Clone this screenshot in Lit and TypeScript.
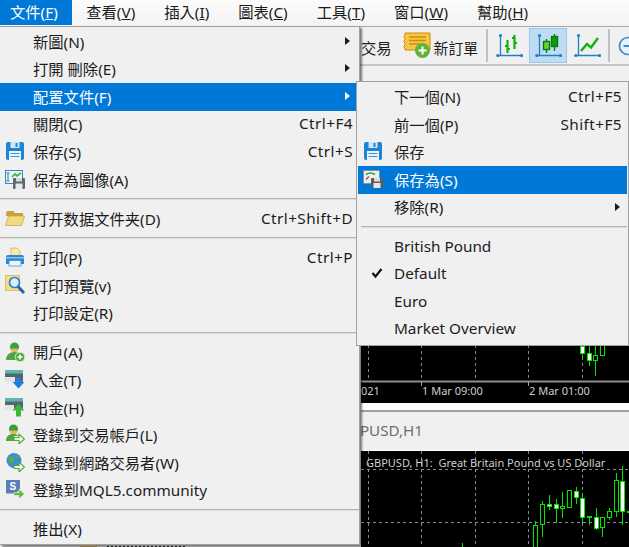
import { LitElement, css, html, svg } from "lit";
import { customElement } from "lit/decorators.js";

type Item = { label?: string; key?: string; icon?: string; arrow?: boolean; active?: boolean; check?: boolean; sep?: boolean };

const ARROW_WHITE = svg`<path d="M9 13.5h5V10l5.500 5-5.500 5v-3.500H9z" fill="#eef6e6" stroke="#58a83a" stroke-width="1.200"/>`;
const ARROW_GREEN = svg`<path d="M9 13.5h5V10l5.500 5-5.500 5v-3.500H9z" fill="#62bd42" stroke="#e8f4df" stroke-width=".6"/>`;

const ICONS: Record<string, unknown> = {
  save: svg`
    <rect x="1" y="1" width="18" height="18" rx="2" fill="#1d84d4"/>
    <rect x="5.500" y="1" width="9" height="6" fill="#cfe6f7"/>
    <rect x="10.500" y="2" width="2" height="4" fill="#1d84d4"/>
    <rect x="4" y="10" width="12" height="9" fill="#eaf3fa"/>
    <path d="M5.500 12.500h9M5.500 15.500h9" stroke="#3e93d6" stroke-width="1.200"/>
  `,
  saveImg: svg`
    <rect x=".5" y="1.500" width="17" height="13" fill="#eef3f6" stroke="#3585c8"/>
    <path d="M3 4v8M1.500 4h3M1.500 12h3" stroke="#2b78bc"/>
    <path d="M7 8l3-3 2 2 4-3" fill="none" stroke="#3cae32" stroke-width="1.600"/>
    <rect x="8" y="9" width="12" height="11" rx="1" fill="#5f666b"/>
    <rect x="11" y="9" width="6" height="3.500" fill="#d5d9dc"/>
    <rect x="10.500" y="14.500" width="7" height="5.500" fill="#e8eaec"/>
  `,
  folder: svg`
    <path d="M1 5l1-2h6l2 2h8v3H1z" fill="#c9a23a"/>
    <path d="M.5 17.500l3-9.500h16l-3 9.500z" fill="#f3da82" stroke="#c9a23a" stroke-width=".7"/>
  `,
  print: svg`
    <path d="M6 1h6l3 3v6H6z" fill="#f9e8a8" stroke="#c8a94a" stroke-width=".7"/>
    <path d="M1 10c0-1 .5-2 2-2h14c1.500 0 2 1 2 2v7H1z" fill="#2f86d2"/>
    <path d="M1 10h18v1.500H1z" fill="#8cc3ec"/>
    <rect x="4" y="13.500" width="12" height="5.500" fill="#eef4f9" stroke="#2f86d2" stroke-width=".7"/>
  `,
  preview: svg`
    <rect x=".5" y=".5" width="14" height="15" fill="#f4dc86" stroke="#cfb04a" stroke-width=".7"/>
    <circle cx="9.500" cy="7.500" r="5" fill="#dcedfa" stroke="#2f7fc8" stroke-width="1.700"/>
    <path d="M13 11.500l6 6.500" stroke="#2467b0" stroke-width="3"/>
  `,
  open: svg`
    <circle cx="9.500" cy="5" r="4.500" fill="#3f9e36"/>
    <path d="M6 6.500h7V9l-3.500 2L6 9z" fill="#d9b66a"/>
    <path d="M1 18c0-5 3.500-8 8.500-8s8.500 3 8.500 8z" fill="#4aa83e"/>
    <circle cx="15" cy="15" r="4.800" fill="#54ac3e" stroke="#eaf3e4" stroke-width=".8"/>
    <path d="M12.500 15h5M15 12.500v5" stroke="#fff" stroke-width="1.600"/>
  `,
  deposit: svg`
    <rect y="1" width="18" height="12" rx="1" fill="#59646a"/>
    <rect y="1" width="18" height="3.500" fill="#5ab8b0"/>
    <rect y="8" width="10" height="5" fill="#dfe7ea"/>
    <path d="M11 9h5v4h3.500l-6 6.500-6-6.500H11z" fill="#1f7fe0"/>
  `,
  withdraw: svg`
    <rect y="1" width="18" height="12" rx="1" fill="#59646a"/>
    <rect y="1" width="18" height="3.500" fill="#5ab8b0"/>
    <rect y="8" width="9" height="5" fill="#dfe7ea"/>
    <path d="M13.500 7l6 6.500H16v6h-5v-6H7.500z" fill="#3db83a"/>
  `,
  login: svg`
    <circle cx="8.500" cy="5" r="4.500" fill="#3f9e36"/>
    <path d="M5 6.500h7V9l-3.500 2L5 9z" fill="#d9b66a"/>
    <path d="M1 17c0-4.500 3-7 7.500-7 2 0 4 .5 5 2H9v5z" fill="#4aa83e"/>
    ${ARROW_WHITE}
  `,
  web: svg`
    <circle cx="9" cy="8.500" r="7.500" fill="#3a8cd6"/>
    <path d="M3 6c3-3 5-1 6 1s-2 5-4 4zM10 2c2 0 4 2 4 4l-3-1z" fill="#58b03c"/>
    ${ARROW_WHITE}
  `,
  mql: svg`
    <path d="M1 1h14v10l-5 3.500H1z" fill="#5b7fb5"/>
    <text x="4.500" y="11" font-size="10" font-weight="700" fill="#fff" font-family="Liberation Sans">S</text>
    ${ARROW_GREEN}
  `,
  saveAs: svg`
    <rect x=".5" y="1.500" width="16" height="13" fill="#e8f0f0" stroke="#7d8a8f" stroke-width=".8"/>
    <path d="M3 5.500c3-2 6-2 9 0" fill="none" stroke="#2fa62f" stroke-width="1.600"/>
    <path d="M3 10.500l3-3" stroke="#d24b3a" stroke-width="1.600"/>
    <rect x="8" y="9" width="12" height="10" rx="1" fill="#565c60"/>
    <rect x="11" y="9" width="6" height="3.500" fill="#d8dcdf"/>
    <rect x="10.500" y="14" width="7" height="5" fill="#e6e8ea"/>
  `,
};

const MAIN: Item[] = [
  { label: "新圖(N)", arrow: true },
  { label: "打開 刪除(E)", arrow: true },
  { label: "配置文件(F)", arrow: true, active: true },
  { label: "關閉(C)", key: "Ctrl+F4" },
  { label: "保存(S)", key: "Ctrl+S", icon: "save" },
  { label: "保存為圖像(A)", icon: "saveImg" },
  { sep: true },
  { label: "打开数据文件夹(D)", key: "Ctrl+Shift+D", icon: "folder" },
  { sep: true },
  { label: "打印(P)", key: "Ctrl+P", icon: "print" },
  { label: "打印預覽(v)", icon: "preview" },
  { label: "打印設定(R)" },
  { sep: true },
  { label: "開戶(A)", icon: "open" },
  { label: "入金(T)", icon: "deposit" },
  { label: "出金(H)", icon: "withdraw" },
  { label: "登錄到交易帳戶(L)", icon: "login" },
  { label: "登錄到網路交易者(W)", icon: "web" },
  { label: "登錄到MQL5.community", icon: "mql" },
  { sep: true },
  { label: "推出(X)" },
];

const SUB: Item[] = [
  { label: "下一個(N)", key: "Ctrl+F5" },
  { label: "前一個(P)", key: "Shift+F5" },
  { label: "保存", icon: "save" },
  { label: "保存為(S)", icon: "saveAs", active: true },
  { label: "移除(R)", arrow: true },
  { sep: true },
  { label: "British Pound" },
  { label: "Default", check: true },
  { label: "Euro" },
  { label: "Market Overview" },
];

const MENUBAR: [string, string][] = [
  ["文件", "F"],
  ["查看", "V"],
  ["插入", "I"],
  ["圖表", "C"],
  ["工具", "T"],
  ["窗口", "W"],
  ["幫助", "H"],
];

// [x, wickTop, wickBottom, bodyTop, bodyBottom, filled]
const LOWER_CANDLES: number[][] = [
  [462, 543, 550, 550, 551, 0],
  [535, 521, 550, 525, 550, 0],
  [542, 501, 537, 504, 524, 0],
  [549, 495, 510, 504, 506, 1],
  [556, 499, 523, 504, 508, 1],
  [562, 492, 518, 506, 508, 0],
  [569, 490, 507, 490, 507, 0],
  [576, 487, 504, 491, 497, 1],
  [582, 493, 523, 498, 517, 1],
  [589, 516, 525, 516, 517, 1],
  [596, 508, 530, 517, 528, 1],
  [602, 517, 537, 517, 527, 0],
  [609, 508, 520, 511, 517, 0],
  [616, 473, 517, 480, 511, 0],
  [622, 466, 525, 481, 511, 1],
  [629, 470, 530, 511, 512, 1],
];

const UPPER_CANDLES: number[][] = [
  [582, 340, 360, 346, 353, 1],
  [589, 346, 366, 353, 360, 1],
  [595, 346, 376, 355, 360, 0],
  [602, 340, 355, 340, 355, 0],
];

const GRID_X = [368, 421, 475, 528, 582];

@customElement("app-root")
export class AppRoot extends LitElement {
  static override styles = css`
    :host {
      display: block;
      position: relative;
      width: 629px;
      height: 547px;
      overflow: hidden;
      background: #f0f0f0;
      font-family: "Noto Sans", "Noto Sans CJK TC", sans-serif;
      font-size: 15.3px;
      color: #1c1c1c;
    }

    .menubar {
      display: flex;
      height: 26px;
      box-sizing: border-box;
      background: linear-gradient(#fcfcfc, #f3f3f3);
    }
    .menubar span {
      padding: 0 14.5px;
      line-height: 25px;
      height: 25px;
      flex: none;
      white-space: nowrap;
    }
    .menubar span:first-child {
      padding-left: 10px;
      padding-right: 14px;
      background: #0078d7;
      color: #fff;
    }

    .toolbar {
      display: flex;
      align-items: center;
      box-sizing: border-box;
      height: 40px;
      padding-left: 361px;
      border-top: 1px solid #a8a8a8;
      border-bottom: 2px solid #c4c4c4;
      white-space: nowrap;
      overflow: hidden;
    }
    .toolbar > * { flex: none; }
    .trade { padding-top: 3px; }
    .order { display: flex; align-items: center; gap: 3px; margin-left: 11px; }
    .order span { padding-top: 3px; font-size: 14.8px; }
    .vsep { width: 2px; height: 33px; background: #c0c0c0; }
    .order + .vsep { margin: 0 2px 0 8px; }
    .tool { width: 38px; height: 35px; display: flex; align-items: center; justify-content: center; }
    .tool.on { background: #bfdcf5; outline: 1px solid #99c8ee; outline-offset: -1px; margin: 0 1px; }
    .tool + .vsep { margin: 0 8px 0 2px; }

    .charts { display: flex; flex-direction: column; margin-left: 361px; padding-top: 15px; }
    .chart { background: #000; flex: none; overflow: hidden; }
    .chart svg { display: block; }
    .chart text { font-family: "Noto Sans", sans-serif; font-size: 11px; fill: #cfcfcf; white-space: pre; }
    .chart.upper { height: 322px; }
    .white-strip { height: 7px; background: #fff; border-bottom: 2px solid #a0a0a0; }
    .title-strip {
      height: 38px;
      margin-left: -22px;
      padding-bottom: 2px;
      box-sizing: border-box;
      font-size: 15.2px;
      color: #6e6e6e;
      display: flex;
      align-items: center;
      white-space: nowrap;
    }
    .chart.lower { height: 97px; border-top: 1px solid #fff; }

    .menu {
      position: absolute;
      box-sizing: border-box;
      background: #f0f0f0;
      border: 1px solid #a0a0a0;
    }
    .menu.main {
      left: 0;
      top: 26px;
      width: 360px;
      height: 519px;
      padding-top: 0.8px;
      border-left: none;
      box-shadow: 2px 2px 2px rgba(0, 0, 0, 0.5);
    }
    .menu.sub {
      left: 356px;
      top: 81px;
      width: 273px;
      height: 265px;
      padding-top: 1.2px;
    }

    .row {
      position: relative;
      display: flex;
      align-items: center;
      box-sizing: border-box;
      height: 27.6px;
      padding: 0 6px 2px 33px;
      white-space: nowrap;
    }
    .sub .row { padding: 0 5px 2px 36px; margin: 0 1px; }
    .row.active { background: #0078d7; color: #fff; }
    .row .label { flex: 1; }
    .row .key { margin-left: 12px; letter-spacing: 0.45px; }
    .row .ico { position: absolute; left: 5px; top: 3px; width: 20px; height: 20px; }
    .row .arrow {
      position: absolute;
      right: 9px;
      top: 9px;
      border-left: 5px solid currentColor;
      border-top: 4.5px solid transparent;
      border-bottom: 4.5px solid transparent;
    }
    .sub .row .arrow { right: 7px; }
    .row .check { position: absolute; left: 13px; top: 7px; width: 12px; height: 12px; }
    .separator { height: 1px; background: #b4b4b4; border-bottom: 1px solid #dedede; margin: 4.8px 0; }
    .sub .separator { margin: 4.8px 1px 4.8px 4px; }

    /* what peeks out below the main menu: the panel behind it */
    .peek { position: absolute; bottom: 0; height: 1.5px; }
    .peek.icon { left: 80px; width: 17px; background: #d8b84a; }
    .peek.name {
      left: 107px;
      width: 78px;
      background: repeating-linear-gradient(90deg, #222 0 2px, transparent 2px 4px);
    }
  `;

  private renderItem(item: Item) {
    if (item.sep) return html`<div class="separator"></div>`;
    return html`
      <div class="row ${item.active ? "active" : ""}">
        ${item.icon ? html`<svg class="ico" viewBox="0 0 20 20">${ICONS[item.icon]}</svg>` : ""}
        ${item.check
          ? html`<svg class="check" viewBox="0 0 12 12"><path d="M1.500 6l3 3.500L10.500 2" fill="none" stroke="#111" stroke-width="2.200" /></svg>`
          : ""}
        <span class="label">${item.label}</span>
        ${item.key ? html`<span class="key">${item.key}</span>` : ""}
        ${item.arrow ? html`<span class="arrow"></span>` : ""}
      </div>
    `;
  }

  private renderCandle([x, wt, wb, bt, bb, filled]: number[]) {
    return svg`
      <path d="M${x + 0.5} ${wt}V${wb}" stroke="#00e400" />
      <rect x=${x - 1.5} y=${bt + 0.5} width="4" height=${Math.max(bb - bt, 1)}
        fill=${filled ? "#fff" : "#000"} stroke="#00e400" />
    `;
  }

  private renderGridX(y1: number, y2: number) {
    return GRID_X.map((x) => svg`<path d="M${x + 0.5} ${y1}V${y2}" stroke="#7d8a94" stroke-dasharray="3 3" />`);
  }

  private renderAxes() {
    return svg`
      <path d="M4.500 2v20.500M1.500 22.500H26" fill="none" stroke="#1f7fc8" stroke-width="1.300" />
      <circle cx="4.500" cy="2.500" r="1.600" fill="#1f7fc8" />
      <circle cx="1.800" cy="22.500" r="1.600" fill="#1f7fc8" />
      <circle cx="25.500" cy="22.500" r="1.600" fill="#1f7fc8" />
    `;
  }

  override render() {
    return html`
      <div class="menubar">
        ${MENUBAR.map(([t, k]) => html`<span>${t}(<u>${k}</u>)</span>`)}
      </div>
      <div class="toolbar">
        <span class="trade">交易</span>
        <span class="order">
          <svg width="28" height="27" viewBox="0 0 28 27">
            <path d="M2 1h25v17H2v-2L.5 14.500 2 13v-2L.5 9.500 2 8V6L.5 4.500 2 3z" fill="#f6c840" stroke="#d08a14" />
            <path d="M6 5h17M6 8.500h17M6 12h11" stroke="#d08a14" stroke-width="1.500" />
            <circle cx="19.500" cy="18.500" r="7.500" fill="#62b23c" />
            <path d="M15.500 18.500h8M19.500 14.500v8" stroke="#fff" stroke-width="2" />
          </svg>
          <span>新訂單</span>
        </span>
        <span class="vsep"></span>
        <span class="tool">
          <svg width="27" height="26" viewBox="0 0 27 26">
            ${this.renderAxes()}
            <path d="M11.500 7v13M9 13h2.500M11.500 16H14M18.500 2v14M16 5h2.500M18.500 10H21" fill="none" stroke="#0fb30f" stroke-width="2.200" />
          </svg>
        </span>
        <span class="tool on">
          <svg width="27" height="26" viewBox="0 0 27 26">
            ${this.renderAxes()}
            <path d="M11.500 6v14M19.500 1v17" stroke="#0a7a0a" stroke-width="1.400" />
            <rect x="8.500" y="8.500" width="6" height="8" fill="#5fd42f" stroke="#0a7a0a" stroke-width="1.400" />
            <rect x="16.500" y="3.500" width="6" height="10" fill="#0c9c0c" stroke="#0a7a0a" stroke-width="1.400" />
          </svg>
        </span>
        <span class="tool">
          <svg width="27" height="26" viewBox="0 0 27 26">
            ${this.renderAxes()}
            <path d="M7 18l6-7 4 3.500 7-9.500" fill="none" stroke="#0fb30f" stroke-width="2.400" />
          </svg>
        </span>
        <span class="vsep"></span>
        <svg width="20" height="20" viewBox="0 0 20 20">
          <circle cx="10" cy="10" r="8.500" fill="#e9f2fa" stroke="#3a8ad0" stroke-width="1.700" />
          <path d="M5.500 10h9" stroke="#3a8ad0" stroke-width="2" />
        </svg>
      </div>
      <div class="charts">
        <div class="chart upper">
          <svg width="268" height="322" viewBox="361 81 268 322">
            ${this.renderGridX(81, 381)}
            ${UPPER_CANDLES.map((c) => this.renderCandle(c))}
            <path d="M361 381.500H629" stroke="#8e8e8e" stroke-width="2" />
            <path d="M421.500 382v4M528.500 382v4" stroke="#a0a0a0" />
            <text x="361" y="395">021</text>
            <text x="422" y="395">1 Mar 09:00</text>
            <text x="529" y="395">2 Mar 01:00</text>
          </svg>
        </div>
        <div class="white-strip"></div>
        <div class="title-strip">GBPUSD,H1</div>
        <div class="chart lower">
          <svg width="268" height="97" viewBox="361 451 268 97">
            ${this.renderGridX(451, 547)}
            <path d="M361 469.500H629M361 522.500H629" stroke="#8c8c8c" stroke-dasharray="3 3" />
            ${LOWER_CANDLES.map((c) => this.renderCandle(c))}
            <text x="366" y="467">GBPUSD, H1:  Great Britain Pound vs US Dollar</text>
          </svg>
        </div>
      </div>
      <span class="peek icon"></span>
      <span class="peek name"></span>
      <div class="menu main">${MAIN.map((i) => this.renderItem(i))}</div>
      <div class="menu sub">${SUB.map((i) => this.renderItem(i))}</div>
    `;
  }
}
